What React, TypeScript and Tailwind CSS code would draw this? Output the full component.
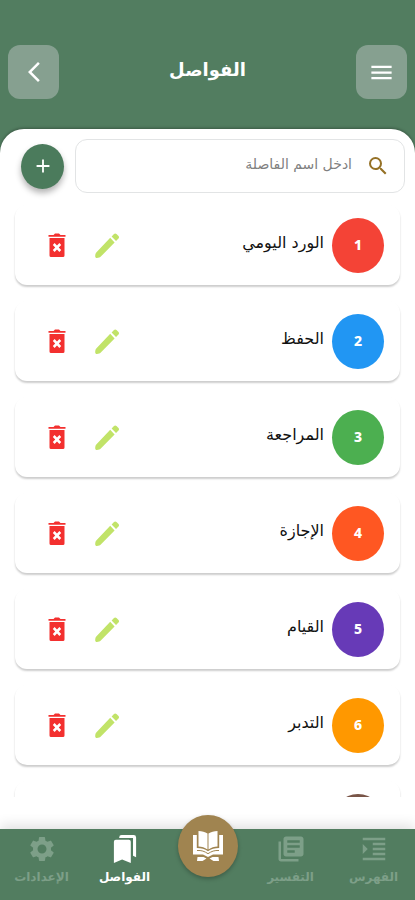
import { ReactNode } from 'react';
import { MdAdd, MdArrowBackIosNew, MdFormatIndentIncrease, MdLibraryBooks, MdMenu, MdSearch, MdSettings } from 'react-icons/md';

interface Separator {
  id: number;
  name?: string;
  color: string;
}

const separators: Separator[] = [
  { id: 1, name: 'الورد اليومي', color: 'bg-[#f44336]' },
  { id: 2, name: 'الحفظ', color: 'bg-[#2196f3]' },
  { id: 3, name: 'المراجعة', color: 'bg-[#4caf50]' },
  { id: 4, name: 'الإجازة', color: 'bg-[#ff5722]' },
  { id: 5, name: 'القيام', color: 'bg-[#673ab7]' },
  { id: 6, name: 'التدبر', color: 'bg-[#ff9800]' },
  { id: 7, color: 'bg-[#795548]' },
];

function TrashIcon() {
  return (
    <svg viewBox="0 0 18 24" className="h-6 w-[18px]" fill="currentColor" aria-hidden="true">
      <path d="M.5 2h5L7 .5h4L12.500 2h5v1.800H.5z" />
      <path
        fillRule="evenodd"
        d="M1.500 5h15v17.500a1.500 1.500 0 0 1-1.500 1.500H3a1.500 1.500 0 0 1-1.500-1.500zM4.800 11.900 7.200 14.500 4.800 17.100 6.600 18.900 9 16.400 11.400 18.900 13.200 17.100 10.800 14.500 13.200 11.900 11.400 10.100 9 12.600 6.600 10.100z"
      />
    </svg>
  );
}

function PencilIcon() {
  return (
    <svg viewBox="0 0 24 25" className="h-[25px] w-6" fill="currentColor" aria-hidden="true">
      <path d="M15.200 4.800 19.600 9.400 5.800 23.600C4.800 24.600 3.500 25 2 25 .8 25 .2 24.300.2 23.200c0-1.500.3-3 1.300-4z" />
      <path d="M16.600 3.400 19 1c.8-.8 1.800-.8 2.500 0l2 2.100c.7.700.7 1.700 0 2.500L21 8z" />
    </svg>
  );
}

function BookmarksIcon() {
  return (
    <svg viewBox="0 0 24 29" className="my-[2px] h-7 w-6" fill="currentColor" aria-hidden="true">
      <path d="M2.500 5H16a2 2 0 0 1 2 2v22l-9-3.700L.5 29V7a2 2 0 0 1 2-2z" />
      <path d="M6 3V2.500A2.500 2.500 0 0 1 8.500 0H21a2.500 2.500 0 0 1 2.500 2.500V23L20.300 21.500V3z" />
    </svg>
  );
}

// Open mushaf resting on a wooden stand
function QuranIcon() {
  return (
    <svg viewBox="0 0 32 32" className="size-8" fill="currentColor" aria-hidden="true">
      <path d="M6.500 1c3.500.2 6.500 1 9 2.600v15.800c-2.700-1.900-5.700-2.900-9-3zM25.500 1c-3.500.2-6.500 1-9 2.600v15.800c2.700-1.900 5.700-2.900 9-3z" />
      <path d="M1 5h3.800v13c4.400 0 8 1 11.200 3.200C19.200 19 22.800 18 27.200 18V5H31v19.500H21L16 27l-5-2.500H1z" />
      <path d="M5 20.500c4.500-.3 7.500.8 11 3.200 3.500-2.400 6.500-3.500 11-3.200" fill="none" stroke="#a08450" />
      <path d="M5.500 27h6l3 1.500L10.500 31H5zM26.500 27h-6l-3 1.500 4 2.500H27z" />
    </svg>
  );
}

function SeparatorCard({ separator }: { separator: Separator }) {
  return (
    <li className="flex h-20 shrink-0 items-center rounded-xl bg-white px-4 shadow-[0_2px_2px_rgba(0,0,0,0.2)]">
      <span className={`flex h-[55px] w-[52px] shrink-0 items-center justify-center rounded-[50%] font-['Noto_Sans'] text-sm font-extrabold text-white ${separator.color}`}>
        {separator.name && separator.id}
      </span>
      <span className="ms-2 flex-1 pb-1 text-base text-[#111]">{separator.name}</span>
      <button type="button" aria-label="تعديل" className="flex size-8 items-center justify-center text-[#c1e368]">
        <PencilIcon />
      </button>
      <button type="button" aria-label="حذف" className="ms-[18px] me-[10px] flex size-8 items-center justify-center text-[#f3302f]">
        <TrashIcon />
      </button>
    </li>
  );
}

function NavItem({ icon, label, active = false }: { icon: ReactNode; label: string; active?: boolean }) {
  return (
    <a href="#" className={`flex flex-col items-center gap-1 pt-1 text-xs font-bold ${active ? 'text-white' : 'text-[#7d9f88]'}`}>
      <span className="flex h-8 items-center">{icon}</span>
      <span className="leading-4">{label}</span>
    </a>
  );
}

export default function App() {
  return (
    <div dir="rtl" className="flex h-screen flex-col bg-[#527d60] font-['DejaVu_Sans',sans-serif]">
      <header className="flex items-center justify-between px-2 pt-[45px] pb-[30px] text-white">
        <button type="button" aria-label="القائمة" className="flex h-[54px] w-[51px] items-center justify-center rounded-xl bg-[#86a090]">
          <MdMenu className="size-[27px]" />
        </button>
        <h1 className="pb-1 text-lg font-bold">الفواصل</h1>
        <button type="button" aria-label="رجوع" className="flex h-[54px] w-[51px] items-center justify-center rounded-xl bg-[#86a090]">
          <MdArrowBackIosNew className="size-6" />
        </button>
      </header>

      <main className="flex min-h-0 flex-1 flex-col rounded-t-3xl bg-white shadow-[0_-1px_3px_rgba(0,0,0,0.3)]">
        <div className="flex items-center gap-[11px] ps-[10px] pe-[21px] pt-[10px] pb-3">
          <label className="flex h-[54px] min-w-0 flex-1 items-center gap-[14px] rounded-xl border border-[#e2e4e5] ps-[14px]">
            <MdSearch className="size-6 shrink-0 text-[#957126]" />
            <input
              type="text"
              aria-label="ادخل اسم الفاصلة"
              placeholder="ادخل اسم الفاصلة"
              className="min-w-0 flex-1 bg-transparent pb-1 text-sm outline-none placeholder:text-[#808080]"
            />
          </label>
          <button
            type="button"
            aria-label="إضافة"
            className="flex h-[45px] w-[43px] shrink-0 items-center justify-center rounded-[50%] bg-[#4b7b5c] text-white shadow-[0_4px_6px_rgba(0,0,0,0.3)]"
          >
            <MdAdd className="size-[22px]" />
          </button>
        </div>

        <ul className="flex min-h-0 flex-1 flex-col gap-4 overflow-hidden px-[15px]">
          {separators.map((separator) => (
            <SeparatorCard key={separator.id} separator={separator} />
          ))}
        </ul>
        <div className="h-8 shrink-0" />
      </main>

      <nav className="grid h-[71px] shrink-0 grid-cols-5 bg-[#527d60] shadow-[0_-4px_12px_rgba(0,0,0,0.12)]">
        <NavItem icon={<MdFormatIndentIncrease className="size-[30px]" />} label="الفهرس" />
        <NavItem icon={<MdLibraryBooks className="size-[30px]" />} label="التفسير" />
        <a href="#" aria-label="المصحف" className="-mt-[14px] flex h-[62px] w-[60px] items-center justify-center justify-self-center rounded-[50%] bg-[#a08450] text-white shadow-[0_2px_4px_rgba(0,0,0,0.25)]">
          <QuranIcon />
        </a>
        <NavItem icon={<BookmarksIcon />} label="الفواصل" active />
        <NavItem icon={<MdSettings className="size-[30px]" />} label="الإعدادات" />
      </nav>
    </div>
  );
}
